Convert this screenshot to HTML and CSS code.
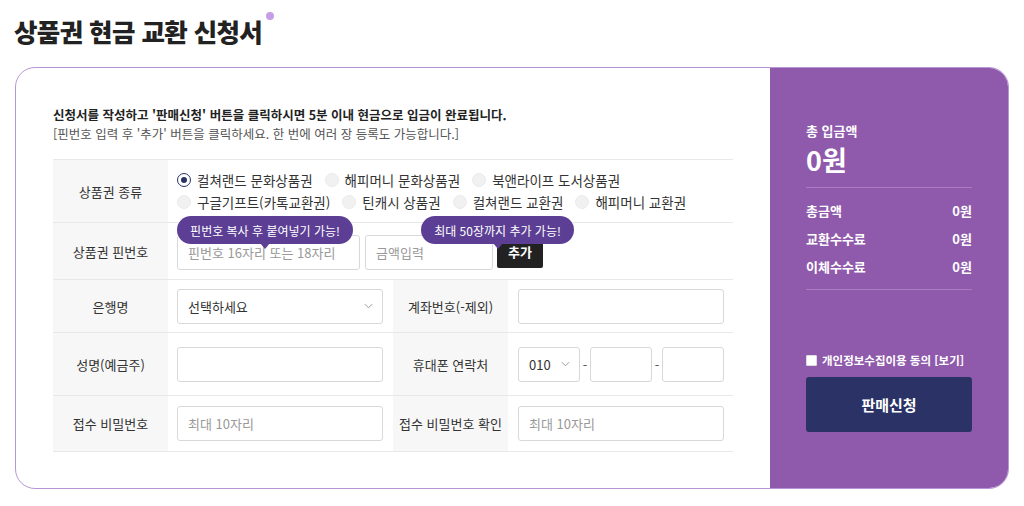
FILE: index.html
```html
<!DOCTYPE html>
<html lang="ko">
<head>
<meta charset="utf-8">
<title>상품권 현금 교환 신청서</title>
<link rel="stylesheet" href="styles.css">
</head>
<body>
<div class="page">
  <h1 class="title">상품권 현금 교환 신청서<span class="dot"></span></h1>
  <div class="card">
    <div class="main">
      <p class="intro-strong">신청서를 작성하고 '판매신청' 버튼을 클릭하시면 5분 이내 현금으로 입금이 완료됩니다.</p>
      <p class="intro">[핀번호 입력 후 '추가' 버튼을 클릭하세요. 한 번에 여러 장 등록도 가능합니다.]</p>
      <div class="form">
        <div class="label">상품권 종류</div>
        <div class="cell span3 radios">
          <div class="radio-line">
            <label class="radio checked"><span class="circle"></span>컬쳐랜드 문화상품권</label>
            <label class="radio"><span class="circle"></span>해피머니 문화상품권</label>
            <label class="radio"><span class="circle"></span>북앤라이프 도서상품권</label>
          </div>
          <div class="radio-line">
            <label class="radio"><span class="circle"></span>구글기프트(카톡교환권)</label>
            <label class="radio"><span class="circle"></span>틴캐시 상품권</label>
            <label class="radio"><span class="circle"></span>컬쳐랜드 교환권</label>
            <label class="radio"><span class="circle"></span>해피머니 교환권</label>
          </div>
        </div>

        <div class="label">상품권 핀번호</div>
        <div class="cell span3 pin-cell">
          <div class="field pin ph">핀번호 16자리 또는 18자리</div>
          <div class="field amount ph">금액입력</div>
          <button class="add-btn">추가</button>
          <div class="tip tip1">핀번호 복사 후 붙여넣기 가능!</div>
          <div class="tip tip2">최대 50장까지 추가 가능!</div>
        </div>

        <div class="label">은행명</div>
        <div class="cell">
          <div class="field select">선택하세요<svg class="chev" viewBox="0 0 10 6" width="9" height="6"><path d="M1 1l4 4 4-4" fill="none" stroke="#999" stroke-width="1.1"/></svg></div>
        </div>
        <div class="label">계좌번호(-제외)</div>
        <div class="cell right"><div class="field"></div></div>

        <div class="label">성명(예금주)</div>
        <div class="cell"><div class="field"></div></div>
        <div class="label">휴대폰 연락처</div>
        <div class="cell right phone">
          <div class="field select small">010<svg class="chev" viewBox="0 0 10 6" width="9" height="6"><path d="M1 1l4 4 4-4" fill="none" stroke="#999" stroke-width="1.1"/></svg></div>
          <span class="dash">-</span>
          <div class="field small"></div>
          <span class="dash">-</span>
          <div class="field small"></div>
        </div>

        <div class="label">접수 비밀번호</div>
        <div class="cell"><div class="field ph">최대 10자리</div></div>
        <div class="label">접수 비밀번호 확인</div>
        <div class="cell right"><div class="field ph">최대 10자리</div></div>
      </div>
    </div>
    <aside class="summary">
      <div class="sum-title">총 입금액</div>
      <div class="sum-total">0원</div>
      <div class="sum-list">
        <div class="sum-row"><span>총금액</span><span>0원</span></div>
        <div class="sum-row"><span>교환수수료</span><span>0원</span></div>
        <div class="sum-row"><span>이체수수료</span><span>0원</span></div>
      </div>
      <label class="agree"><span class="box"></span>개인정보수집이용 동의 [보기]</label>
      <button class="submit">판매신청</button>
    </aside>
  </div>
</div>
</body>
</html>
```

FILE: styles.css
```css
* { box-sizing: border-box; }
html, body { margin: 0; padding: 0; background: #fff; }
body {
  font-family: "Noto Sans CJK KR", "Noto Sans", sans-serif;
  color: #333;
  font-size: 13px;
}
.page { padding: 0 15px; }
.title {
  margin: 0 0 0 -1px;
  padding-top: 13px;
  height: 67px;
  font-size: 25.5px;
  font-weight: 900;
  color: #222;
  line-height: 36px;
  letter-spacing: -0.6px;
}
.dot {
  display: inline-block;
  width: 8px; height: 8px;
  border-radius: 50%;
  background: #c69ee6;
  vertical-align: top;
  margin-left: 4px;
  margin-top: -1px;
}
.card {
  display: flex;
  width: 994px;
  height: 422px;
  border: 1px solid #b896d6;
  border-radius: 20px;
  overflow: hidden;
}
.main {
  flex: 1;
  padding: 37px 37px 0 37px;
}
.intro-strong {
  margin: 0;
  font-size: 12.5px;
  font-weight: 700;
  color: #222;
  line-height: 19px;
}
.intro {
  margin: 0;
  font-size: 12.5px;
  color: #555;
  line-height: 19px;
}
.form {
  margin-top: 16px;
  display: grid;
  grid-template-columns: 115px 225px 115px 225px;
  grid-template-rows: 63px 57px 53px 63px 56px;
  border-top: 1px solid #e8e8e8;
}
.label, .cell { border-bottom: 1px solid #e8e8e8; }
.label {
  background: #f7f7f7;
  display: flex;
  align-items: center;
  justify-content: center;
  font-size: 13px;
  color: #333;
}
.cell {
  display: flex;
  align-items: center;
  padding-left: 9px;
}
.cell.right { padding-left: 10px; }
.span3 { grid-column: span 3; }
.radios {
  flex-direction: column;
  align-items: flex-start;
  justify-content: center;
  gap: 2px;
}
.radio-line { display: flex; height: 20px; align-items: center; }
.radio {
  display: flex;
  align-items: center;
  font-size: 13.5px;
  color: #333;
  margin-right: 12px;
}
.circle {
  width: 14px; height: 14px;
  border-radius: 50%;
  background: #f1f1f1;
  border: 1px solid #ebebeb;
  margin-right: 6px;
  position: relative;
}
.radio.checked .circle {
  background: #fff;
  border: 1.5px solid #2b3366;
}
.radio.checked .circle::after {
  content: "";
  position: absolute;
  left: 2.5px; top: 2.5px;
  width: 6px; height: 6px;
  border-radius: 50%;
  background: #2b3366;
}
.field {
  width: 206px;
  height: 35px;
  border: 1px solid #d8d8d8;
  border-radius: 3px;
  background: #fff;
  display: flex;
  align-items: center;
  padding-left: 10px;
  font-size: 13px;
  color: #333;
}
.field.ph { color: #999; }
.field.select { justify-content: space-between; padding-right: 9px; }
.pin-cell { position: relative; }
.field.pin { width: 183px; margin-top: 2px; }
.field.amount { width: 128px; margin-left: 5px; margin-top: 2px; }
.add-btn {
  margin-left: 4px;
  margin-top: 1px;
  width: 46px;
  height: 32px;
  border: 0;
  border-radius: 2px;
  background: #222;
  color: #fff;
  font-family: inherit;
  font-size: 13px;
  font-weight: 700;
  padding: 0;
}
.tip {
  position: absolute;
  top: -7px;
  height: 28px;
  border-radius: 14px;
  background: #5c3f94;
  color: #fff;
  font-size: 12px;
  display: flex;
  align-items: center;
  justify-content: center;
}
.tip::after {
  content: "";
  position: absolute;
  left: 50%;
  bottom: -5px;
  margin-left: -5px;
  border-left: 5px solid transparent;
  border-right: 5px solid transparent;
  border-top: 6px solid #5c3f94;
}
.tip1 { left: 9px; width: 176px; }
.tip2 { left: 253px; width: 153px; }
.field.small { width: 62px; }
.field.select.small { padding-left: 10px; padding-right: 9px; }
.dash { width: 10px; text-align: center; color: #555; font-size: 13px; }
.summary {
  width: 238px;
  background: #8f5aac;
  color: #fff;
  padding: 53px 36px 0 36px;
  display: flex;
  flex-direction: column;
}
.sum-title { font-size: 13px; font-weight: 700; line-height: 20px; }
.sum-total { font-size: 27px; font-weight: 700; line-height: 38px; }
.sum-list {
  margin-top: 8px;
  border-top: 1px solid #a97cc2;
  border-bottom: 1px solid #a97cc2;
  padding: 9px 0 8px;
}
.sum-row {
  display: flex;
  justify-content: space-between;
  font-size: 13px;
  font-weight: 700;
  line-height: 28px;
}
.agree {
  margin-top: 62px;
  display: flex;
  align-items: center;
  font-size: 11.5px;
  font-weight: 700;
  line-height: 16px;
}
.box {
  width: 11px; height: 11px;
  background: #fff;
  border: 1px solid #ddd;
  border-radius: 1px;
  margin-right: 5px;
}
.submit {
  margin-top: 9px;
  height: 55px;
  border: 0;
  border-radius: 3px;
  background: #2b3366;
  color: #fff;
  font-family: inherit;
  font-size: 15px;
  font-weight: 700;
}
```
